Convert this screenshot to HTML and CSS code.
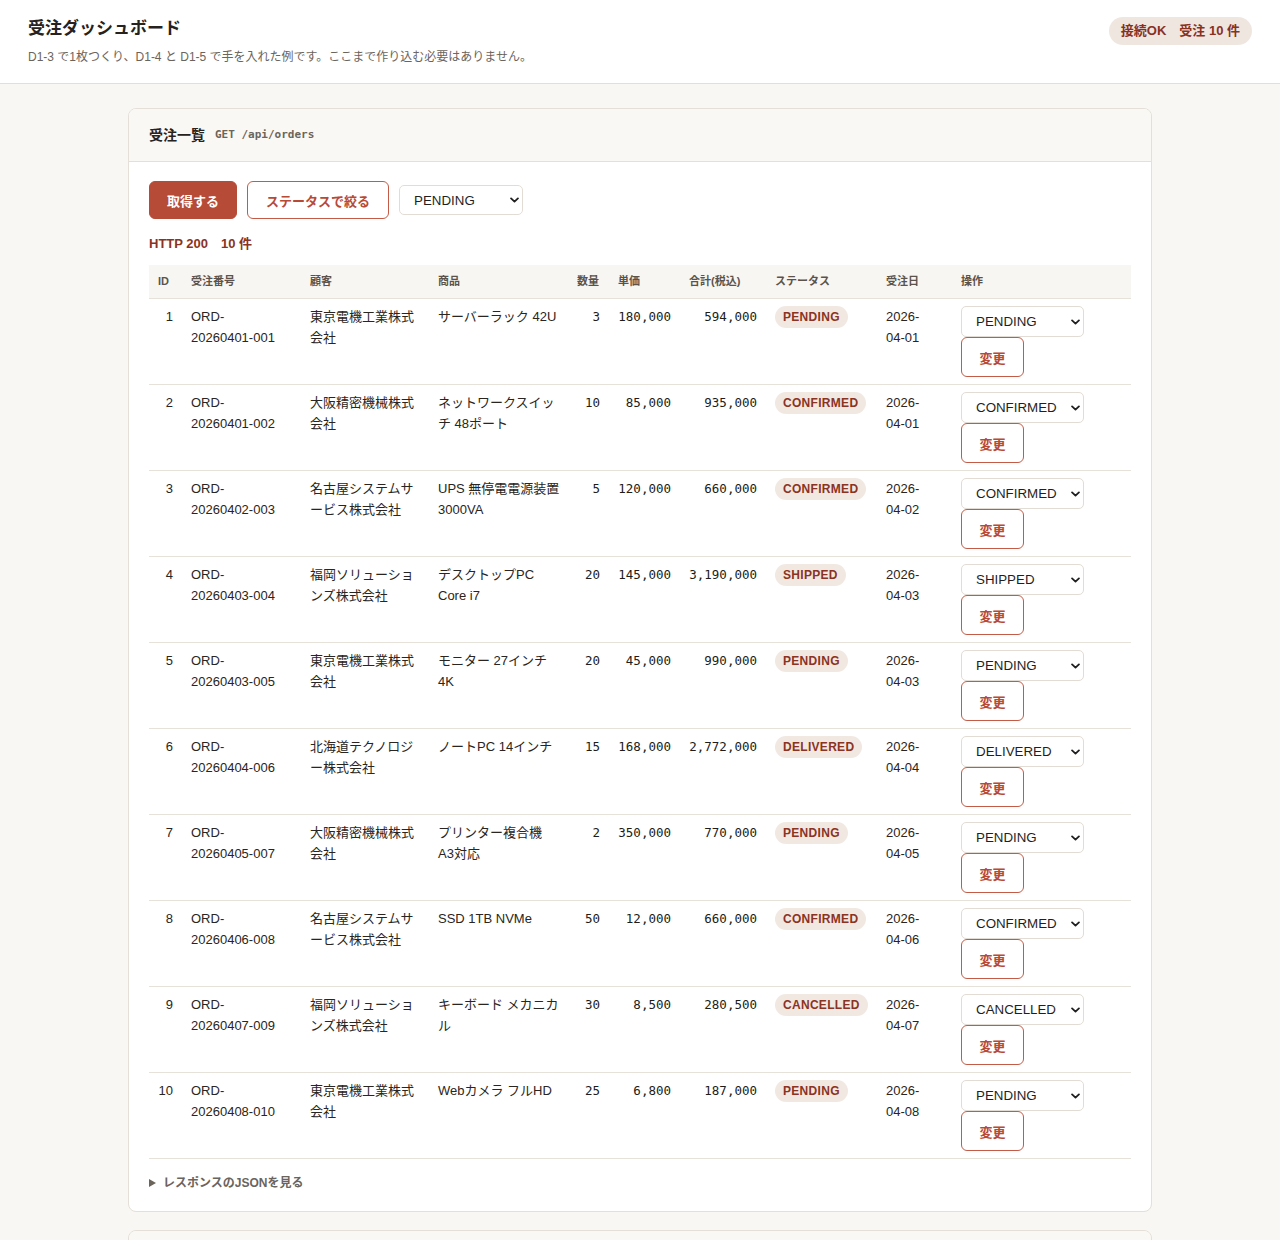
FILE: index.html
```html
<!DOCTYPE html>
<html lang="ja">
<head>
<meta charset="utf-8">
<title>受注ダッシュボード</title>
<link rel="stylesheet" href="styles.css">
</head>
<body>
<header class="topbar">
  <div class="brand">
    <h1 class="title">受注ダッシュボード</h1>
    <p class="sub">D1-3 で1枚つくり、D1-4 と D1-5 で手を入れた例です。ここまで作り込む必要はありません。</p>
  </div>
  <div class="conn">接続OK<span class="gap"></span>受注 10 件</div>
</header>

<main class="main">
  <section class="card">
    <div class="card-head">
      <span class="card-title">受注一覧</span>
      <code class="endpoint">GET /api/orders</code>
    </div>
    <div class="card-body">
      <div class="toolbar">
        <button class="btn btn-primary" type="button">取得する</button>
        <button class="btn btn-outline" type="button">ステータスで絞る</button>
        <span class="selwrap">
          <select class="sel sel-filter"><option>PENDING</option><option>CONFIRMED</option><option>SHIPPED</option><option>DELIVERED</option><option>CANCELLED</option></select>
          <svg class="chev" viewBox="0 0 10 6" width="10" height="6"><path d="M1.2 1.2 5 4.8 8.8 1.2" fill="none" stroke="#1f1f1f" stroke-width="2" stroke-linecap="round" stroke-linejoin="round"/></svg>
        </span>
      </div>
      <div class="result">HTTP 200　10 件</div>

      <table class="orders">
        <colgroup>
          <col class="c-id"><col class="c-no"><col class="c-cust"><col class="c-item"><col class="c-qty"><col class="c-price"><col class="c-total"><col class="c-status"><col class="c-date"><col class="c-op">
        </colgroup>
        <thead>
          <tr><th>ID</th><th>受注番号</th><th>顧客</th><th>商品</th><th>数量</th><th>単価</th><th>合計(税込)</th><th>ステータス</th><th>受注日</th><th>操作</th></tr>
        </thead>
        <tbody id="rows">
          <tr><td class="num">1</td><td>ORD-<span class="nw">20260401-001</span></td><td>東京電機工業株式会社</td><td class="item">サーバーラック 42U</td><td class="mono">3</td><td class="mono">180,000</td><td class="mono">594,000</td><td><span class="badge">PENDING</span></td><td>2026-<span class="nw">04-01</span></td><td><span class="selwrap"><select class="sel"><option selected>PENDING</option><option>CONFIRMED</option><option>SHIPPED</option><option>DELIVERED</option><option>CANCELLED</option></select><svg class="chev" viewBox="0 0 10 6" width="10" height="6"><path d="M1.2 1.2 5 4.8 8.8 1.2" fill="none" stroke="#1f1f1f" stroke-width="2" stroke-linecap="round" stroke-linejoin="round"/></svg></span><button class="btn-change" type="button">変更</button></td></tr>
          <tr><td class="num">2</td><td>ORD-<span class="nw">20260401-002</span></td><td>大阪精密機械株式会社</td><td class="item">ネットワークスイッチ 48ポート</td><td class="mono">10</td><td class="mono">85,000</td><td class="mono">935,000</td><td><span class="badge">CONFIRMED</span></td><td>2026-<span class="nw">04-01</span></td><td><span class="selwrap"><select class="sel"><option>PENDING</option><option selected>CONFIRMED</option><option>SHIPPED</option><option>DELIVERED</option><option>CANCELLED</option></select><svg class="chev" viewBox="0 0 10 6" width="10" height="6"><path d="M1.2 1.2 5 4.8 8.8 1.2" fill="none" stroke="#1f1f1f" stroke-width="2" stroke-linecap="round" stroke-linejoin="round"/></svg></span><button class="btn-change" type="button">変更</button></td></tr>
          <tr><td class="num">3</td><td>ORD-<span class="nw">20260402-003</span></td><td>名古屋システムサービス株式会社</td><td class="item">UPS 無停電電源装置 <span class="nw">3000VA</span></td><td class="mono">5</td><td class="mono">120,000</td><td class="mono">660,000</td><td><span class="badge">CONFIRMED</span></td><td>2026-<span class="nw">04-02</span></td><td><span class="selwrap"><select class="sel"><option>PENDING</option><option selected>CONFIRMED</option><option>SHIPPED</option><option>DELIVERED</option><option>CANCELLED</option></select><svg class="chev" viewBox="0 0 10 6" width="10" height="6"><path d="M1.2 1.2 5 4.8 8.8 1.2" fill="none" stroke="#1f1f1f" stroke-width="2" stroke-linecap="round" stroke-linejoin="round"/></svg></span><button class="btn-change" type="button">変更</button></td></tr>
          <tr><td class="num">4</td><td>ORD-<span class="nw">20260403-004</span></td><td>福岡ソリューションズ株式会社</td><td class="item">デスクトップPC Core i7</td><td class="mono">20</td><td class="mono">145,000</td><td class="mono">3,190,000</td><td><span class="badge">SHIPPED</span></td><td>2026-<span class="nw">04-03</span></td><td><span class="selwrap"><select class="sel"><option>PENDING</option><option>CONFIRMED</option><option selected>SHIPPED</option><option>DELIVERED</option><option>CANCELLED</option></select><svg class="chev" viewBox="0 0 10 6" width="10" height="6"><path d="M1.2 1.2 5 4.8 8.8 1.2" fill="none" stroke="#1f1f1f" stroke-width="2" stroke-linecap="round" stroke-linejoin="round"/></svg></span><button class="btn-change" type="button">変更</button></td></tr>
          <tr><td class="num">5</td><td>ORD-<span class="nw">20260403-005</span></td><td>東京電機工業株式会社</td><td class="item">モニター 27インチ 4K</td><td class="mono">20</td><td class="mono">45,000</td><td class="mono">990,000</td><td><span class="badge">PENDING</span></td><td>2026-<span class="nw">04-03</span></td><td><span class="selwrap"><select class="sel"><option selected>PENDING</option><option>CONFIRMED</option><option>SHIPPED</option><option>DELIVERED</option><option>CANCELLED</option></select><svg class="chev" viewBox="0 0 10 6" width="10" height="6"><path d="M1.2 1.2 5 4.8 8.8 1.2" fill="none" stroke="#1f1f1f" stroke-width="2" stroke-linecap="round" stroke-linejoin="round"/></svg></span><button class="btn-change" type="button">変更</button></td></tr>
          <tr><td class="num">6</td><td>ORD-<span class="nw">20260404-006</span></td><td>北海道テクノロジー株式会社</td><td class="item">ノートPC 14インチ</td><td class="mono">15</td><td class="mono">168,000</td><td class="mono">2,772,000</td><td><span class="badge">DELIVERED</span></td><td>2026-<span class="nw">04-04</span></td><td><span class="selwrap"><select class="sel"><option>PENDING</option><option>CONFIRMED</option><option>SHIPPED</option><option selected>DELIVERED</option><option>CANCELLED</option></select><svg class="chev" viewBox="0 0 10 6" width="10" height="6"><path d="M1.2 1.2 5 4.8 8.8 1.2" fill="none" stroke="#1f1f1f" stroke-width="2" stroke-linecap="round" stroke-linejoin="round"/></svg></span><button class="btn-change" type="button">変更</button></td></tr>
          <tr><td class="num">7</td><td>ORD-<span class="nw">20260405-007</span></td><td>大阪精密機械株式会社</td><td class="item">プリンター複合機 <span class="nw">A3対応</span></td><td class="mono">2</td><td class="mono">350,000</td><td class="mono">770,000</td><td><span class="badge">PENDING</span></td><td>2026-<span class="nw">04-05</span></td><td><span class="selwrap"><select class="sel"><option selected>PENDING</option><option>CONFIRMED</option><option>SHIPPED</option><option>DELIVERED</option><option>CANCELLED</option></select><svg class="chev" viewBox="0 0 10 6" width="10" height="6"><path d="M1.2 1.2 5 4.8 8.8 1.2" fill="none" stroke="#1f1f1f" stroke-width="2" stroke-linecap="round" stroke-linejoin="round"/></svg></span><button class="btn-change" type="button">変更</button></td></tr>
          <tr><td class="num">8</td><td>ORD-<span class="nw">20260406-008</span></td><td>名古屋システムサービス株式会社</td><td class="item">SSD 1TB NVMe</td><td class="mono">50</td><td class="mono">12,000</td><td class="mono">660,000</td><td><span class="badge">CONFIRMED</span></td><td>2026-<span class="nw">04-06</span></td><td><span class="selwrap"><select class="sel"><option>PENDING</option><option selected>CONFIRMED</option><option>SHIPPED</option><option>DELIVERED</option><option>CANCELLED</option></select><svg class="chev" viewBox="0 0 10 6" width="10" height="6"><path d="M1.2 1.2 5 4.8 8.8 1.2" fill="none" stroke="#1f1f1f" stroke-width="2" stroke-linecap="round" stroke-linejoin="round"/></svg></span><button class="btn-change" type="button">変更</button></td></tr>
          <tr><td class="num">9</td><td>ORD-<span class="nw">20260407-009</span></td><td>福岡ソリューションズ株式会社</td><td class="item">キーボード メカニカル</td><td class="mono">30</td><td class="mono">8,500</td><td class="mono">280,500</td><td><span class="badge">CANCELLED</span></td><td>2026-<span class="nw">04-07</span></td><td><span class="selwrap"><select class="sel"><option>PENDING</option><option>CONFIRMED</option><option>SHIPPED</option><option>DELIVERED</option><option selected>CANCELLED</option></select><svg class="chev" viewBox="0 0 10 6" width="10" height="6"><path d="M1.2 1.2 5 4.8 8.8 1.2" fill="none" stroke="#1f1f1f" stroke-width="2" stroke-linecap="round" stroke-linejoin="round"/></svg></span><button class="btn-change" type="button">変更</button></td></tr>
          <tr><td class="num">10</td><td>ORD-<span class="nw">20260408-010</span></td><td>東京電機工業株式会社</td><td class="item">Webカメラ フルHD</td><td class="mono">25</td><td class="mono">6,800</td><td class="mono">187,000</td><td><span class="badge">PENDING</span></td><td>2026-<span class="nw">04-08</span></td><td><span class="selwrap"><select class="sel"><option selected>PENDING</option><option>CONFIRMED</option><option>SHIPPED</option><option>DELIVERED</option><option>CANCELLED</option></select><svg class="chev" viewBox="0 0 10 6" width="10" height="6"><path d="M1.2 1.2 5 4.8 8.8 1.2" fill="none" stroke="#1f1f1f" stroke-width="2" stroke-linecap="round" stroke-linejoin="round"/></svg></span><button class="btn-change" type="button">変更</button></td></tr>
        </tbody>
      </table>

      <details class="raw">
        <summary>レスポンスのJSONを見る</summary>
      </details>
    </div>
  </section>

  <section class="card card-next">
    <div class="card-head card-head-empty"></div>
  </section>
</main>
</body>
</html>
```

FILE: styles.css
```css
* { box-sizing: border-box; }

html, body {
  margin: 0;
  padding: 0;
}

body {
  background: #f9f7f3;
  color: #2a2521;
  font-family: "Liberation Sans", "Noto Sans CJK JP", sans-serif;
  font-size: 13px;
}

/* ---------- top bar ---------- */
.topbar {
  display: flex;
  justify-content: space-between;
  align-items: flex-start;
  background: #ffffff;
  border-bottom: 1px solid #e3ded6;
  padding: 16px 28px 17px;
}

.title {
  margin: 0;
  font-size: 17px;
  line-height: 26px;
  font-weight: 700;
  color: #27221e;
}

.sub {
  margin: 6px 0 0;
  font-size: 12px;
  line-height: 18px;
  color: #6b645c;
}

.conn {
  margin-top: 1px;
  height: 28px;
  line-height: 28px;
  padding: 0 12px;
  border-radius: 14px;
  background: #efe6e0;
  color: #8a3020;
  font-size: 13px;
  font-weight: 700;
  white-space: nowrap;
}

.conn .gap {
  display: inline-block;
  width: 13px;
}

/* ---------- main ---------- */
.main {
  padding: 24px 0 0;
}

.card {
  width: 1024px;
  margin: 0 auto 18px;
  background: #ffffff;
  border: 1px solid #e4dfd7;
  border-radius: 8px;
  overflow: hidden;
}

.card-head {
  height: 53px;
  background: #faf8f4;
  border-bottom: 1px solid #e4dfd7;
  padding: 0 20px 1px;
  display: flex;
  align-items: center;
}

.card-title {
  font-size: 14px;
  line-height: 20px;
  font-weight: 700;
  color: #27221e;
}

.endpoint {
  margin-left: 10px;
  font-family: "DejaVu Sans Mono", "Liberation Mono", monospace;
  font-size: 11px;
  line-height: 20px;
  font-weight: 700;
  color: #6b645c;
}

.card-body {
  padding: 19px 20px 19px;
}

/* ---------- toolbar ---------- */
.toolbar {
  display: flex;
  align-items: center;
  gap: 10px;
}

.btn {
  height: 38px;
  padding: 0 17px;
  border-radius: 6px;
  font-family: "Liberation Sans", "Noto Sans CJK JP", sans-serif;
  font-size: 13px;
  font-weight: 700;
  cursor: pointer;
}

.btn-primary {
  background: #b64b37;
  border: 1px solid #b64b37;
  color: #ffffff;
}

.btn-outline {
  background: #ffffff;
  border: 1px solid #c35b46;
  color: #b84a35;
  padding: 0 18px;
}

.selwrap {
  position: relative;
  display: inline-block;
}

.sel {
  display: block;
  -webkit-appearance: none;
  appearance: none;
  width: 123px;
  height: 31px;
  padding: 0 20px 0 14px;
  border: 1px solid #e2dcd4;
  border-radius: 5px;
  background: #ffffff;
  color: #1f1f1f;
  font-family: "Liberation Sans", Arial, sans-serif;
  font-size: 13.333px;
}

.sel-filter {
  width: 124px;
  height: 30px;
}

.chev {
  position: absolute;
  right: 4px;
  top: 50%;
  width: 9px;
  height: 6px;
  margin-top: -3px;
  pointer-events: none;
}

.result {
  margin: 15px 0 11px;
  font-size: 13px;
  line-height: 20px;
  font-weight: 700;
  color: #8b3322;
}

/* ---------- table ---------- */
.orders {
  width: 100%;
  border-collapse: collapse;
  table-layout: fixed;
}

.c-id { width: 33px; }
.c-no { width: 119px; }
.c-cust { width: 128px; }
.c-item { width: 139px; }
.c-qty { width: 41px; }
.c-price { width: 71px; }
.c-total { width: 86px; }
.c-status { width: 111px; }
.c-date { width: 75px; }
.c-op { width: 179px; }

.orders th {
  background: #f8f6f2;
  text-align: left;
  font-size: 11px;
  line-height: 17px;
  font-weight: 700;
  color: #5b534b;
  padding: 8px 9px;
  border-bottom: 1px solid #e6e1d9;
  white-space: nowrap;
}

.orders td {
  vertical-align: top;
  padding: 7px 9px;
  font-size: 13px;
  line-height: 21px;
  color: #2a2521;
  border-bottom: 1px solid #e6e1d9;
}

.orders td.item {
  padding-right: 6px;
}

.orders td.num {
  text-align: right;
}

.orders td.mono {
  text-align: right;
  font-family: "DejaVu Sans Mono", "Liberation Mono", monospace;
  font-size: 12.5px;
  color: #201c19;
}

.nw {
  white-space: nowrap;
}

.badge {
  display: inline-block;
  vertical-align: top;
  height: 22px;
  line-height: 22px;
  padding: 0 8px;
  border-radius: 11px;
  background: #f1e8e2;
  color: #8b3322;
  font-size: 12px;
  font-weight: 700;
  letter-spacing: 0.3px;
}

.btn-change {
  display: block;
  width: 63px;
  height: 40px;
  padding: 0;
  background: #ffffff;
  border: 1px solid #c35b46;
  border-radius: 6px;
  color: #b84a35;
  font-family: "Liberation Sans", "Noto Sans CJK JP", sans-serif;
  font-size: 13px;
  font-weight: 700;
  cursor: pointer;
}

/* ---------- details ---------- */
.raw {
  margin-top: 15px;
}

.raw summary {
  list-style: none;
  font-size: 12px;
  line-height: 18px;
  font-weight: 700;
  color: #6b645c;
  cursor: pointer;
}

.raw summary::-webkit-details-marker {
  display: none;
}

.raw summary::before {
  content: "";
  display: inline-block;
  width: 0;
  height: 0;
  border-top: 4px solid transparent;
  border-bottom: 4px solid transparent;
  border-left: 7px solid #6b645c;
  margin-right: 7px;
  vertical-align: 0px;
}
```
